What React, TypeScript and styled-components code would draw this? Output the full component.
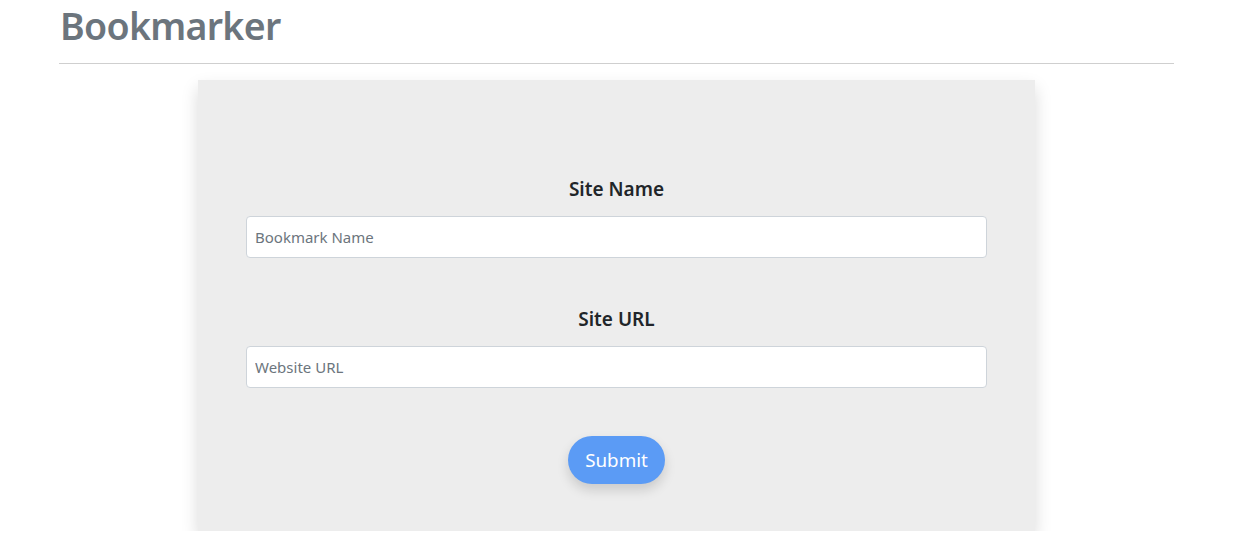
import React from "react";
import styled, { createGlobalStyle } from "styled-components";

const Global = createGlobalStyle`
  html, body { margin: 0; padding: 0; background: #ffffff; }
  body { font-family: "Noto Sans", "Open Sans", sans-serif; color: #212529; }
  * { box-sizing: border-box; }
`;

const Page = styled.div`
  width: 1115px;
  margin-left: 59px;
  display: flex;
  flex-direction: column;
`;

const Title = styled.h1`
  margin: 0 0 0 1px;
  font-size: 37.5px;
  line-height: 51px;
  font-weight: 600;
  letter-spacing: -0.7px;
  color: #6c757d;
`;

const Rule = styled.hr`
  margin: 12px 0 0;
  border: 0;
  border-top: 1px solid #cfcfcf;
  width: 100%;
`;

const Card = styled.form`
  align-self: center;
  margin-top: 16px;
  width: 837px;
  padding: 95px 48px 47px;
  background: #ededed;
  box-shadow: 0 8px 16px rgba(0, 0, 0, 0.15);
  display: flex;
  flex-direction: column;
  align-items: center;
`;

const Field = styled.div<{ $gap?: number }>`
  width: 100%;
  display: flex;
  flex-direction: column;
  align-items: center;
  margin-top: ${(p) => p.$gap ?? 0}px;
`;

const Label = styled.label`
  font-size: 19px;
  line-height: 28px;
  font-weight: 600;
  color: #212529;
  margin-bottom: 13px;
`;

const Input = styled.input`
  width: 100%;
  height: 42px;
  padding: 0 8px;
  font-family: inherit;
  font-size: 15px;
  color: #495057;
  background: #ffffff;
  border: 1px solid #ced4da;
  border-radius: 4px;
  outline: none;
  &::placeholder { color: #6c757d; }
`;

const Submit = styled.button`
  margin-top: 48px;
  height: 48px;
  padding: 0 17px;
  border: 0;
  border-radius: 24px;
  background: #5b9bf5;
  color: #ffffff;
  font-family: inherit;
  font-size: 18.8px;
  box-shadow: 0 6px 12px rgba(0, 0, 0, 0.15);
  cursor: pointer;
`;

export default function App() {
  return (
    <>
      <Global />
      <Page>
        <Title>Bookmarker</Title>
        <Rule />
        <Card onSubmit={(e) => e.preventDefault()}>
          <Field>
            <Label htmlFor="site-name">Site Name</Label>
            <Input id="site-name" type="text" placeholder="Bookmark Name" />
          </Field>
          <Field $gap={47}>
            <Label htmlFor="site-url">Site URL</Label>
            <Input id="site-url" type="text" placeholder="Website URL" />
          </Field>
          <Submit type="submit">Submit</Submit>
        </Card>
      </Page>
    </>
  );
}
